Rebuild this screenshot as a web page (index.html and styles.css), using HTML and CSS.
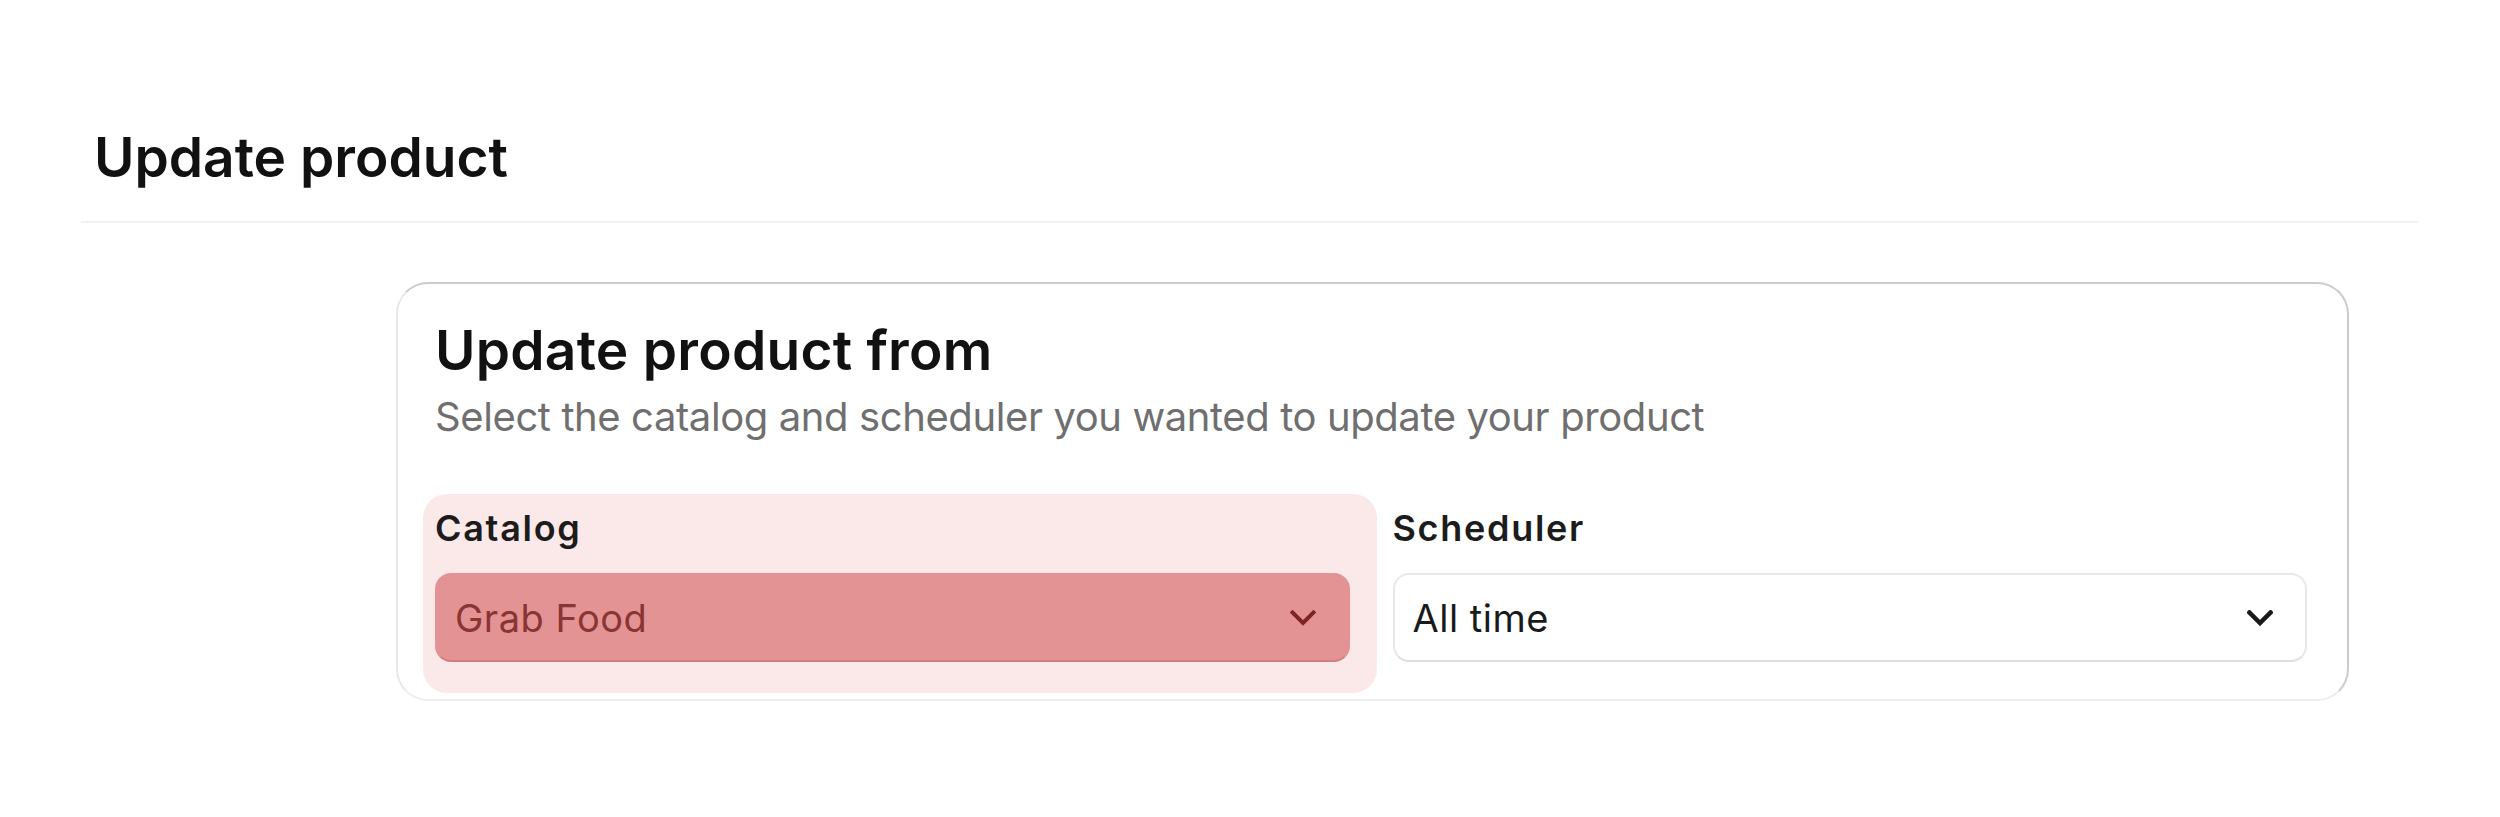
FILE: index.html
```html
<!DOCTYPE html>
<html lang="en">
<head>
<meta charset="utf-8">
<title>Update product</title>
<link rel="stylesheet" href="styles.css">
</head>
<body>
<div class="page">
  <header class="page-header">
    <h1 class="page-title">Update product</h1>
  </header>
  <section class="card">
    <div class="card-head">
      <h2 class="card-title">Update product from</h2>
      <p class="card-sub">Select the catalog and scheduler you wanted to update your product</p>
    </div>
    <div class="fields">
      <div class="field field-highlight">
        <label class="field-label">Catalog</label>
        <div class="select select-danger">
          <span class="select-value">Grab Food</span>
          <svg class="chevron" width="26" height="16" viewBox="0 0 26 16" aria-hidden="true"><path d="M2.5 2.5 L13 13 L23.5 2.5" fill="none" stroke="currentColor" stroke-width="4" stroke-linecap="square" stroke-linejoin="miter"/></svg>
        </div>
      </div>
      <div class="field">
        <label class="field-label">Scheduler</label>
        <div class="select">
          <span class="select-value">All time</span>
          <svg class="chevron" width="26" height="16" viewBox="0 0 26 16" aria-hidden="true"><path d="M2.5 2.5 L13 13 L23.5 2.5" fill="none" stroke="currentColor" stroke-width="4.5" stroke-linecap="square" stroke-linejoin="miter"/></svg>
        </div>
      </div>
    </div>
  </section>
</div>
</body>
</html>
```

FILE: styles.css
```css
* { box-sizing: border-box; }
html, body { margin: 0; padding: 0; background: #ffffff; }
body {
  font-family: Inter, "Noto Sans", "Liberation Sans", sans-serif;
  color: #111111;
}
.page {
  margin-left: 81px;
  width: 2337px;
}
.page-header {
  padding: 124px 0 31px 13px;
  border-bottom: 2px solid #f1f1f1;
}
.page-title {
  margin: 0;
  font-size: 55px;
  line-height: 66px;
  font-weight: 600;
  color: #111111;
}
.card {
  margin: 59px 0 0 315px;
  width: 1953px;
  border-style: solid;
  border-width: 2px;
  border-color: #cccccc #cccccc #eeeeee #e8e8e8;
  border-radius: 32px;
  padding: 33px 40px 6px 25px;
  background: #ffffff;
}
.card-head { padding-left: 12px; }
.card-title {
  margin: 0 0 10px 0;
  font-size: 55px;
  line-height: 66px;
  font-weight: 600;
  letter-spacing: 0.25px;
  color: #111111;
}
.card-sub {
  margin: 0;
  font-size: 40px;
  line-height: 48px;
  font-weight: 400;
  letter-spacing: -0.4px;
  color: #6f6f6f;
}
.fields {
  display: flex;
  gap: 16px;
  margin-top: 53px;
}
.field {
  box-sizing: content-box;
  flex: 1 1 0;
  display: flex;
  flex-direction: column;
  gap: 23px;
  padding-top: 12px;
}
.field-highlight {
  background: #fbe9e9;
  border-radius: 24px;
  padding: 12px 27px 31px 12px;
}
.field-label {
  font-size: 36px;
  line-height: 44px;
  font-weight: 600;
  letter-spacing: 1.7px;
  color: #1c1c1c;
}
.select {
  height: 89px;
  border-radius: 16px;
  border: 2px solid #e8e8e8;
  border-bottom-color: #dedede;
  background: #ffffff;
  display: flex;
  align-items: center;
  justify-content: space-between;
  padding: 0 32px 0 18px;
  color: #1a1a1a;
}
.select-danger {
  background: #e39393;
  border-color: #e39393;
  border-bottom-color: #d27e7e;
  color: #7e2424;
}
.select-value {
  font-size: 38px;
  line-height: 46px;
  font-weight: 400;
  letter-spacing: 0.5px;
}
.select-danger .select-value { color: #8a3434; }
.chevron { display: block; flex: none; }
```
